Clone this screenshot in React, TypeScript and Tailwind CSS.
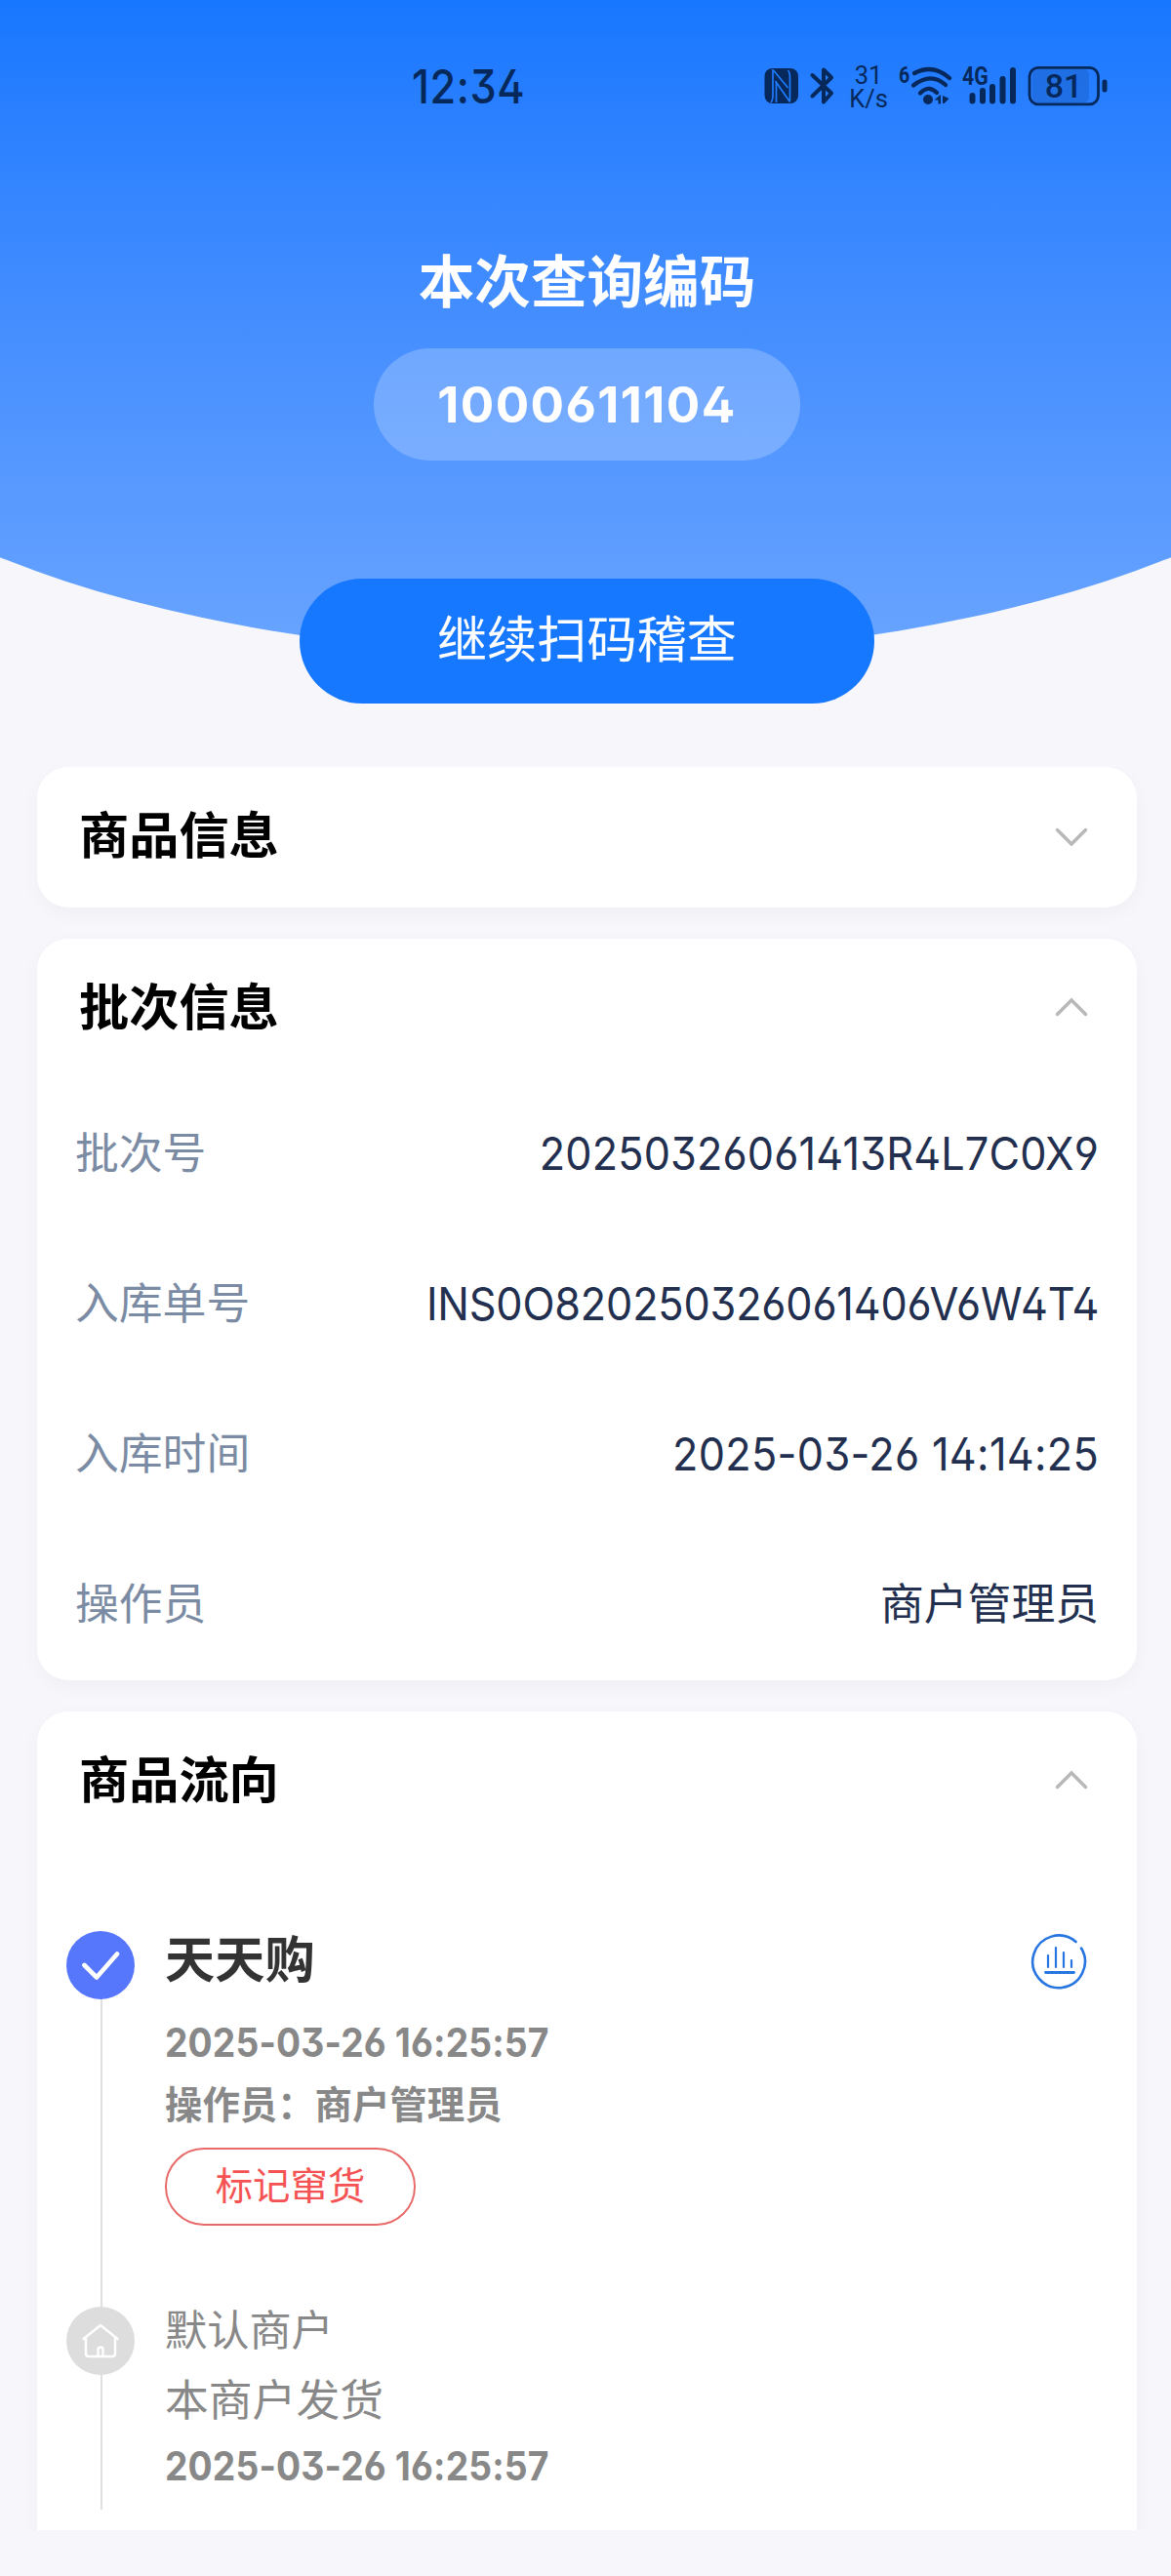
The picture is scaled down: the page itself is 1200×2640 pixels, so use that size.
import type { ReactNode } from 'react';

const batchInfo = [
  { label: '批次号', value: '20250326061413R4L7C0X9', tracking: 'tracking-[0.15px]' },
  { label: '入库单号', value: 'INS0O820250326061406V6W4T4', tracking: 'tracking-[-0.2px]' },
  { label: '入库时间', value: '2025-03-26 14:14:25', tracking: 'tracking-[0.35px]' },
  { label: '操作员', value: '商户管理员', cjk: true },
];

// Latin digits with open 4/6/9 shapes, slightly condensed
const digits = "inline-block whitespace-nowrap font-['Inter',sans-serif] [font-feature-settings:'ss01']";

const StatusBar = () => (
  <div className="h-[176px] relative text-[#06285a]">
    <div className={`${digits} absolute left-[422px] top-[60px] text-[48px] leading-[58px] tracking-[0.7px] font-medium origin-left scale-x-[0.9]`}>
      12:34
    </div>
    <svg className="absolute left-[780px] top-[60px]" width="366" height="56" viewBox="780 60 366 56" fill="none">
      {/* NFC */}
      <rect x="783.5" y="70" width="34.5" height="36" rx="8" fill="#06285a" />
      <path d="M792 71V97Q792 103 790 105M793 72.500L807.500 90M794.500 83L809.500 104.500M807.500 72Q809.500 74 809.500 80V103M795.500 84V105" stroke="#1f7cff" strokeWidth="1.700" />
      {/* Bluetooth */}
      <path d="M832.500 77L852 95.500L844 104.500V71.500L852 79.500L832.500 98.500" stroke="#06285a" strokeWidth="4" strokeLinecap="round" strokeLinejoin="round" />
      {/* Wi-Fi */}
      <path d="M937 75Q956 65 973 80M936 87.500Q954 73.500 969 87M943 95.500Q951.500 86.500 960 95" stroke="#06285a" strokeWidth="4.300" strokeLinecap="round" />
      <circle cx="951" cy="102" r="5" fill="#06285a" />
      <path d="M957.500 102.500L964 97V106.500H961.500V102.500ZM966 106V98L972.500 101L967.500 106Z" fill="#06285a" />
      {/* signal bars */}
      <path d="M996.500 98V103.500M1007 93V103.500M1017 89V103.500M1027.500 81V103.500M1038 72V103.500" stroke="#06285a" strokeWidth="6" strokeLinecap="round" />
      {/* battery */}
      <rect x="1058" y="71" width="58" height="34" rx="5" fill="#06285a" fillOpacity="0.16" />
      <rect x="1055" y="69.300" width="70.500" height="37.500" rx="9" stroke="#06285a" strokeWidth="2.800" />
      <rect x="1129.500" y="81.500" width="5" height="13" rx="2.500" fill="#06285a" />
    </svg>
    <div className="absolute left-[860px] top-[65px] w-[60px] text-center font-['Roboto',sans-serif] text-[25.500px] leading-[24px]">
      <div>31</div>
      <div>K/s</div>
    </div>
    <div className="absolute left-[921px] top-[66px] font-['Roboto',sans-serif] font-bold text-[23px] leading-[24px] origin-left scale-x-[0.85]">6</div>
    <div className="absolute left-[986px] top-[67px] font-['Roboto',sans-serif] font-bold text-[25px] leading-[24px] origin-left scale-x-[0.85]">4G</div>
    <div className="absolute left-[1054px] top-[68px] w-[72px] text-center font-['Roboto',sans-serif] font-medium text-[34px] leading-[41px]">81</div>
  </div>
);

const Chevron = ({ up = false }: { up?: boolean }) => (
  <svg className={up ? 'rotate-180 -mt-1' : ''} width="36" height="20" viewBox="0 0 36 20" fill="none">
    <path d="M3.500 2.500L18 17L32.500 2.500" stroke="#b8b8b8" strokeWidth="3.400" strokeLinecap="round" />
  </svg>
);

interface CardProps {
  title: string;
  open?: boolean;
  className?: string;
  children?: ReactNode;
}

const Card = ({ title, open = false, className = '', children }: CardProps) => (
  <section className={`bg-white rounded-[32px] shadow-[0_6px_20px_rgba(0,0,0,0.03)] ${className}`}>
    <div className="h-[144px] flex items-center justify-between pl-[43px] pr-[49px]">
      <h2 className="text-[51.200px] leading-[60px] font-bold text-black -mt-[10px]">{title}</h2>
      <Chevron up={open} />
    </div>
    {children}
  </section>
);

const ChartIcon = () => (
  <svg width="60" height="60" viewBox="0 0 60 60" fill="none" stroke="#2775e0" strokeLinecap="round">
    <path d="M46.500 9A26.800 26.800 0 1 0 52 15.500" strokeWidth="2.600" />
    <path d="M18 23V35M26 15V35M34 20V35M42 28V35" strokeWidth="2.200" />
    <path d="M15.500 40.500H44.500" strokeWidth="2.800" />
  </svg>
);

const App = () => {
  return (
    <div className="w-[1200px] h-[2640px] bg-[#f6f6fb] overflow-hidden font-['Noto_Sans_CJK_SC',sans-serif]">
      {/* Header */}
      <header className="relative h-[786px]">
        <div className="absolute left-[-240px] top-0 w-[1680px] h-[672px] rounded-b-[50%] bg-linear-to-b from-[#1677ff] to-[#69a4ff]" />
        <div className="relative flex flex-col items-center">
          <div className="w-full">
            <StatusBar />
          </div>
          <h1 className="mt-[73px] ml-[3px] h-[75px] text-[57.600px] leading-[72px] font-bold text-white">本次查询编码</h1>
          <div className="mt-[33px] ml-[3px] w-[437px] h-[115px] rounded-full bg-white/22 flex items-center justify-center">
            <span className={`${digits} text-[51.200px] tracking-[1.400px] font-bold text-white`}>1000611104</span>
          </div>
          <button className="mt-[121px] ml-[3px] w-[589px] h-[128px] rounded-full bg-[#1677ff] text-white text-[51.200px] leading-[60px] pb-[11px]">
            继续扫码稽查
          </button>
        </div>
      </header>

      {/* Cards */}
      <main className="h-[1807px] overflow-hidden pl-[38px] pr-[35px]">
        <Card title="商品信息" />

        <Card title="批次信息" open className="mt-8 h-[760px]">
          {batchInfo.map((item) => (
            <div key={item.label} className="h-[154px] flex items-center justify-between px-[39px] pb-[8px] text-[44.800px] leading-[60px]">
              <span className="text-[#7a8ba3]">{item.label}</span>
              {item.cjk ? (
                <span className="text-[#232f4f]">{item.value}</span>
              ) : (
                <span className={`${digits} ${item.tracking} text-[47px] text-[#232f4f] origin-right scale-x-[0.92] mt-[5px]`}>{item.value}</span>
              )}
            </div>
          ))}
        </Card>

        <Card title="商品流向" open className="mt-8 h-[900px]">
          {/* Timeline */}
          <div className="pt-[81px] pl-[30px] pr-[49px]">
            <div className="flex h-[385px]">
              <div className="w-[70px] flex flex-col items-center">
                <div className="w-[70px] h-[70px] shrink-0 rounded-full bg-[#5677fc] flex items-center justify-center">
                  <svg width="40" height="32" viewBox="0 0 40 32" fill="none">
                    <path d="M3.500 16L16 28.500L37 4.500" stroke="white" strokeWidth="4.600" strokeLinecap="round" strokeLinejoin="round" />
                  </svg>
                </div>
                <div className="w-[2px] flex-1 ml-[2px] bg-[#e0e0e0]" />
              </div>
              <div className="ml-[31px] flex-1 text-[#888888]">
                <div className="h-[60px] flex justify-between">
                  <div className="text-[51.200px] leading-[60px] font-bold text-[#333333] -mt-[4px]">天天购</div>
                  <div className="pt-[2px]">
                    <ChartIcon />
                  </div>
                </div>
                <div className={`${digits} h-[60px] mt-[25px] text-[40.500px] leading-[60px] tracking-[0.15px] font-bold origin-left scale-x-[0.92]`}>
                  2025-03-26 16:25:57
                </div>
                <div className="h-[60px] text-[38.400px] leading-[60px] font-bold">操作员：商户管理员</div>
                <button className="mt-[17px] w-[257px] h-[80px] rounded-full border-2 border-[#e86a6a] text-[#f55353] text-[38.400px] leading-[60px] pb-[9px]">
                  标记窜货
                </button>
              </div>
            </div>
            <div className="flex h-[208px]">
              <div className="w-[70px] flex flex-col items-center">
                <div className="w-[70px] h-[70px] shrink-0 rounded-full bg-[#dddddd] flex items-center justify-center">
                  <svg width="40" height="38" viewBox="0 0 40 38" fill="none" stroke="white" strokeWidth="2.400" strokeLinecap="round" strokeLinejoin="round">
                    <path d="M2.500 17L20 3L37.500 17" />
                    <path d="M5 16V32Q5 35 8 35H32Q35 35 35 32V16" />
                    <path d="M17.500 35V28Q17.500 25.500 20 25.500T22.500 28V35" />
                  </svg>
                </div>
                <div className="w-[2px] flex-1 ml-[2px] bg-[#e0e0e0]" />
              </div>
              <div className="ml-[31px] text-[#888888]">
                <div className="-mt-[4px] text-[43.200px] leading-[50px]">默认商户</div>
                <div className="mt-[22px] text-[44.800px] leading-[50px]">本商户发货</div>
                <div className={`${digits} mt-[16px] text-[40.500px] leading-[60px] tracking-[0.15px] font-bold origin-left scale-x-[0.92]`}>
                  2025-03-26 16:25:57
                </div>
              </div>
            </div>
          </div>
        </Card>
      </main>
    </div>
  );
};

export default App;
